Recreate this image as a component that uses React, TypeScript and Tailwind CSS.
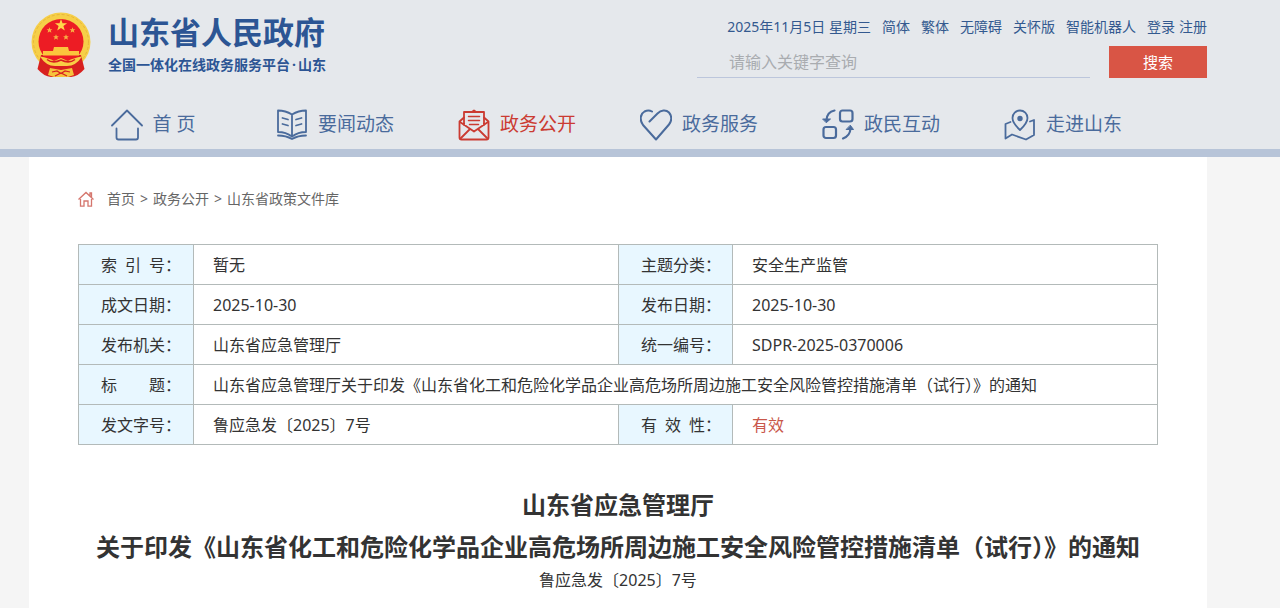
import type { ReactNode } from 'react';

function Emblem() {
  return (
    <svg viewBox="0 0 60 66" className="h-[66px] w-[60px] shrink-0" role="img" aria-label="国徽">
      <circle cx="30" cy="30" r="29.500" fill="#f6cf48" />
      <circle cx="30" cy="30" r="27.500" fill="none" stroke="#e8b63a" strokeWidth="1" strokeDasharray="3 2" />
      <path d="M10 43L6.500 57Q13 64.500 20 65h20q7-.5 13.500-8L50 43z" fill="#d8201f" />
      <circle cx="30" cy="29.500" r="22.500" fill="#ed1c24" />
      <path d="M30 7l1.500 4.300h4.600l-3.700 2.800 1.400 4.500-3.800-2.700-3.800 2.700 1.400-4.500-3.700-2.800h4.600z" fill="#ffd84a" />
      <g fill="#f8b044">
        <path id="star" d="M18.500 15.200l.8 2h2.100l-1.600 1.400.6 2.200-1.900-1.300-1.900 1.300.6-2.200-1.600-1.400h2.100z" />
        <use href="#star" x="23" />
        <use href="#star" x="6.500" y="7" />
        <use href="#star" x="16.500" y="7" />
      </g>
      <path d="M23 35h14l1 4h10v4.500H12V39h10z" fill="#fbc53c" />
      <path d="M9 44.500Q18 46 23 49l7-3 7 3q5-3 14-4.500Q45 54 36 54H24Q15 54 9 44.500z" fill="#f9cf45" />
      <path d="M16 47.500Q22 52 30 48Q38 52 44 47.500" fill="none" stroke="#d8201f" strokeWidth="1.500" />
      <path d="M19 56l11 2 11-2 2 7-6 2H23l-6-2z" fill="#f6c33d" />
      <path d="M21 60l5-1 4 2.500 4-2.500 5 1M24 64l6-3 6 3" fill="none" stroke="#d8201f" strokeWidth="1.200" />
    </svg>
  );
}

function NavIcon({ children }: { children: ReactNode }) {
  return (
    <svg
      viewBox="0 0 32 32"
      className="size-8 shrink-0"
      fill="none"
      stroke="currentColor"
      strokeWidth="1.800"
      strokeLinecap="round"
      strokeLinejoin="round"
      aria-hidden="true"
    >
      {children}
    </svg>
  );
}

const navItems = [
  {
    label: '首 页',
    icon: <path d="M1 16.500L16 1.500L31 16.500M5.500 19.500v9q0 2 2 2h17.500q2 0 2-2v-9" />,
  },
  {
    label: '要闻动态',
    icon: (
      <>
        <path d="M16 5.500Q9.500 1.500 2 1.500v21.500q8 0 14 4.500q6-4.500 14-4.500V1.500Q22.500 1.500 16 5.500zM16 5.500v21.500M2 26.500q8 0 14 3.500q6-3.500 14-3.500" />
        <path d="M6.500 9l5.500 1.500M6.500 15l5.500 1.500M25.500 9L20 10.500M25.500 15L20 16.500" />
      </>
    ),
  },
  {
    label: '政务公开',
    active: true,
    icon: (
      <>
        <path d="M6 8.500L1.500 12.500v16q0 2 2 2h25q2 0 2-2v-16L26 8.500" />
        <path d="M6 16V3h20v13M2 13l14 9.500L30 13M2.500 29.500L12 20M29.500 29.500L20 20M14.500 2.500l1.500-1 1.500 1" />
        <path d="M10.500 7.500h11M10.500 11.500h11M11.500 15.500h9" strokeWidth="1.500" />
      </>
    ),
  },
  {
    label: '政务服务',
    icon: (
      <path
        d="M9.500 12.500L17.500 4.500C21 1 26 0.500 29 3.500C32 7 32 12 29 15.500L16 30.500L3 16C-.5 11 0 5 4.500 2.500Q8.500 0.500 12 2.500"
        strokeWidth="2"
      />
    ),
  },
  {
    label: '政民互动',
    icon: (
      <g strokeWidth="2.200">
        <rect x="18" y="1.500" width="12.500" height="11" rx="2.500" />
        <rect x="1.500" y="18" width="12.500" height="11" rx="2.500" />
        <path d="M12.500 1.500Q5 3 4.500 11M21 29.500Q28 27 28.500 19.500" />
        <path d="M1 10h7.500L4.500 13.500zM24.500 20.500h7L28.500 16.500z" fill="currentColor" strokeWidth="1" />
      </g>
    ),
  },
  {
    label: '走进山东',
    icon: (
      <>
        <path d="M16 21Q8.500 14 8.500 9a7.500 7.500 0 0 1 15 0Q23.500 14 16 21z" />
        <circle cx="16" cy="9.500" r="1.800" fill="currentColor" />
        <path d="M6.500 13L1.500 15v14.500l6.500-4l14 5l8-4.500V11l-4 1.500" />
      </>
    ),
  },
];

const utilityLinks = ['简体', '繁体', '无障碍', '关怀版', '智能机器人'];

function Header() {
  return (
    <header className="border-b-8 border-[#b7c4d8] bg-[#e5e8ec]">
      <div className="mr-[73px] ml-[29px]">
        <div className="flex justify-between pt-3 pl-0.5">
          <div className="flex gap-[17px] text-[#2c5594]">
            <Emblem />
            <div>
              <h1 className="text-[31px] leading-10 font-bold whitespace-nowrap">山东省人民政府</h1>
              <p className="flex gap-0.5 text-sm leading-[26px] font-bold whitespace-nowrap">
                全国一体化在线政务服务平台<span>·</span>
                <span>山东</span>
              </p>
            </div>
          </div>
          <div className="flex flex-col items-end">
            <div className="flex gap-[11px] text-sm leading-[30px] whitespace-nowrap text-[#33598f]">
              <span>2025年11月5日 星期三</span>
              {utilityLinks.map((label) => (
                <a key={label} href="#">
                  {label}
                </a>
              ))}
              <span className="flex gap-1">
                <a href="#">登录</a>
                <a href="#">注册</a>
              </span>
            </div>
            <form className="mt-1 flex gap-[19px]" onSubmit={(e) => e.preventDefault()}>
              <input
                type="text"
                aria-label="搜索关键字"
                placeholder="请输入关键字查询"
                className="h-8 w-[393px] border-b border-[#bcc6dc] bg-transparent pl-8 text-base outline-none placeholder:text-[#a9acb0]"
              />
              <button type="submit" className="h-8 w-[98px] bg-[#d95545] text-[15px] text-white">
                搜索
              </button>
            </form>
          </div>
        </div>
        <nav className="mt-[25px] grid grid-cols-6 pr-[53px] pb-[3px] pl-[33px]">
          {navItems.map((item) => (
            <a
              key={item.label}
              href="#"
              className={`flex h-[43px] items-center justify-center gap-2.5 text-[19px] whitespace-nowrap ${
                item.active ? 'text-[#cb3b32]' : 'text-[#4a6b9c]'
              }`}
            >
              <NavIcon>{item.icon}</NavIcon>
              {item.label}
            </a>
          ))}
        </nav>
      </div>
    </header>
  );
}

function Label({ text }: { text: string }) {
  return (
    <th scope="row" className="h-10 border border-[#b3bab9] bg-[#e8f7ff] pr-0 pl-[22px] font-normal">
      <span className="flex">
        <span className="flex w-16 justify-between">
          {text.split('').map((char) => (
            <span key={char}>{char}</span>
          ))}
        </span>
        ：
      </span>
    </th>
  );
}

function Value({ children, wide, valid }: { children: ReactNode; wide?: boolean; valid?: boolean }) {
  return (
    <td
      colSpan={wide ? 3 : 1}
      className={`h-10 border border-[#b3bab9] pl-[19px] ${valid ? 'text-[#c9574a]' : ''}`}
    >
      {children}
    </td>
  );
}

function DocumentInfo() {
  return (
    <table className="mt-[31px] w-full table-fixed border-collapse text-left text-base leading-6 text-[#333]">
      <colgroup>
        <col className="w-[115px]" />
        <col />
        <col className="w-[114px]" />
        <col />
      </colgroup>
      <tbody>
        <tr>
          <Label text="索引号" />
          <Value>暂无</Value>
          <Label text="主题分类" />
          <Value>安全生产监管</Value>
        </tr>
        <tr>
          <Label text="成文日期" />
          <Value>2025-10-30</Value>
          <Label text="发布日期" />
          <Value>2025-10-30</Value>
        </tr>
        <tr>
          <Label text="发布机关" />
          <Value>山东省应急管理厅</Value>
          <Label text="统一编号" />
          <Value>SDPR-2025-0370006</Value>
        </tr>
        <tr>
          <Label text="标题" />
          <Value wide>
            山东省应急管理厅关于印发《山东省化工和危险化学品企业高危场所周边施工安全风险管控措施清单（试行）》的通知
          </Value>
        </tr>
        <tr>
          <Label text="发文字号" />
          <Value>鲁应急发〔2025〕7号</Value>
          <Label text="有效性" />
          <Value valid>有效</Value>
        </tr>
      </tbody>
    </table>
  );
}

export default function App() {
  return (
    <div
      lang="zh-CN"
      className="min-h-screen bg-[#f5f5f5] font-['Noto_Sans','Noto_Sans_CJK_SC',sans-serif]"
    >
      <Header />
      <main className="mr-[73px] ml-[29px] min-h-[451px] bg-white pt-7 pr-[49px] pb-4 pl-[49px]">
        <nav className="flex items-center text-sm leading-[28px] text-[#666]" aria-label="面包屑">
          <svg
            viewBox="0 0 16 16"
            className="mr-[13px] size-4"
            fill="none"
            stroke="#d5766d"
            strokeWidth="1.300"
            aria-hidden="true"
          >
            <path d="M.5 8.500L8 1.500l7.500 7M12 5V2h1.500v4.500M2.500 8v7.200h3.500V10h4v5.200h3.500V8" />
          </svg>
          <span className="flex gap-[5px]">
            <a href="#">首页</a>
            <span>&gt;</span>
            <a href="#">政务公开</a>
            <span>&gt;</span>
            <a href="#">山东省政策文件库</a>
          </span>
        </nav>
        <DocumentInfo />
        <h2 className="mt-[39px] text-center text-2xl leading-[42px] font-bold text-[#333]">
          山东省应急管理厅
          <br />
          关于印发《山东省化工和危险化学品企业高危场所周边施工安全风险管控措施清单（试行）》的通知
        </h2>
        <p className="text-center text-base leading-6 text-[#333]">鲁应急发〔2025〕7号</p>
      </main>
    </div>
  );
}
